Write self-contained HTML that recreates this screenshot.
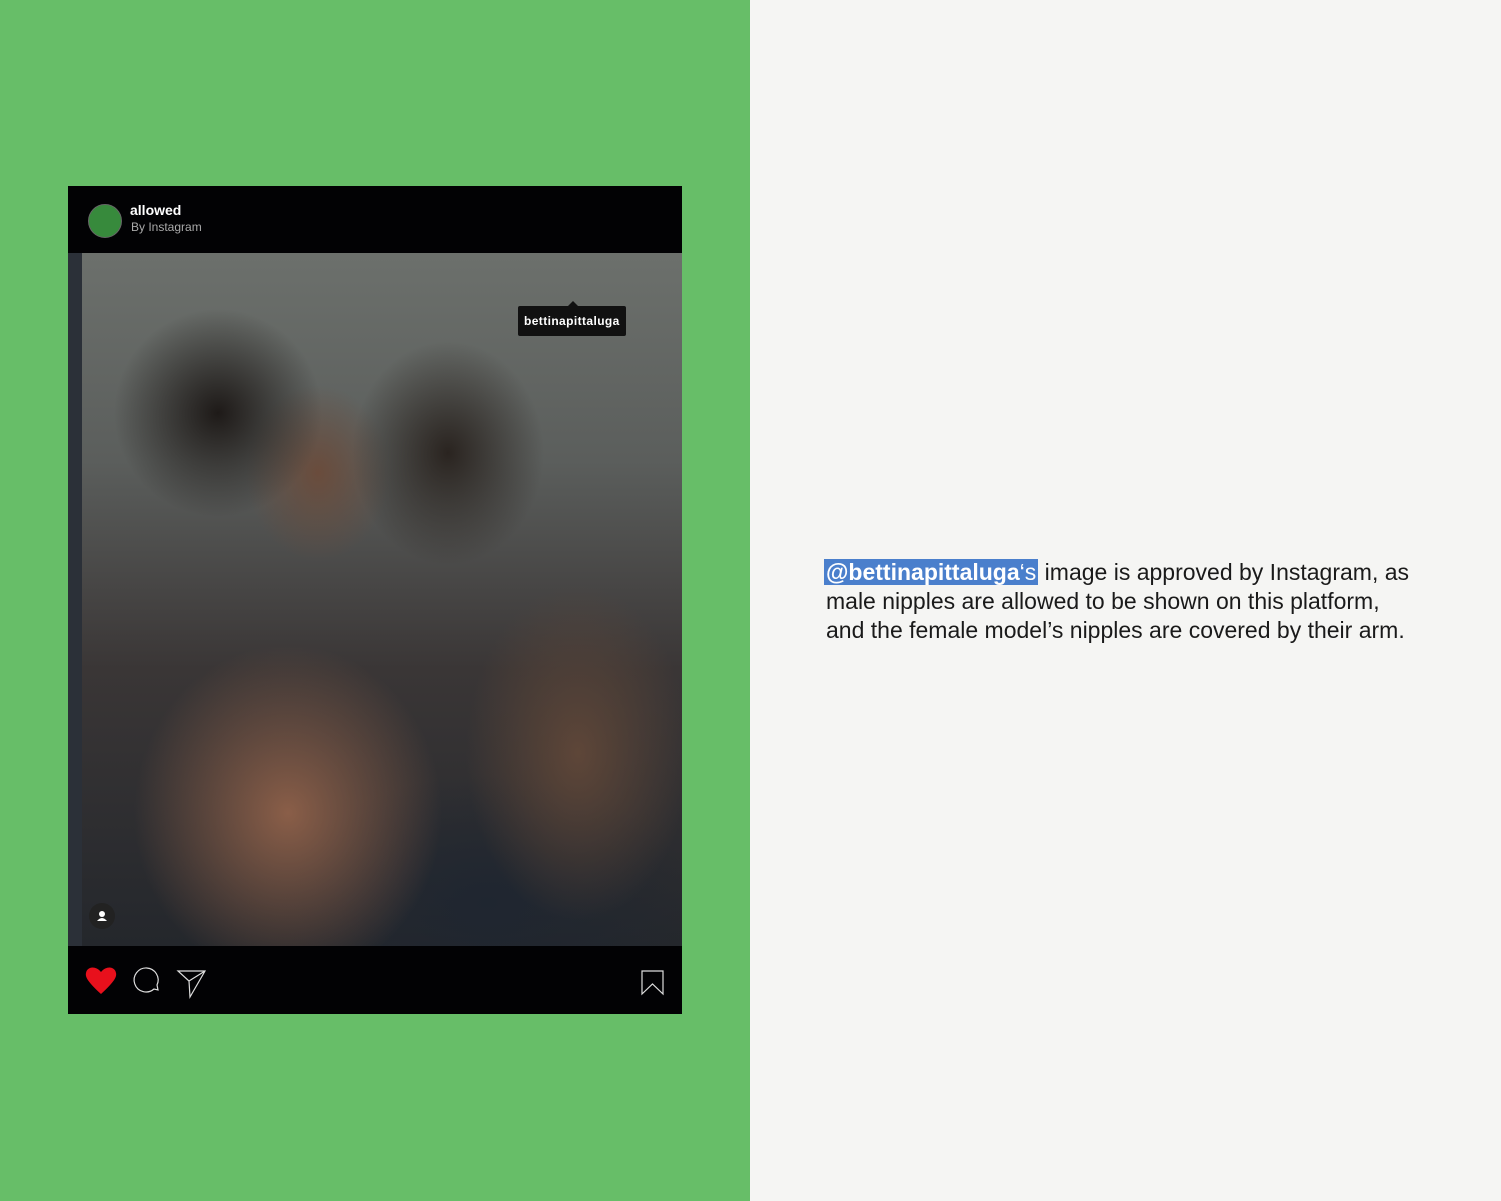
<!DOCTYPE html>
<html><head><style>
body{margin:0;width:1501px;height:1201px;position:relative;background:#f5f5f3;overflow:hidden;font-family:"Liberation Sans",sans-serif}
.left{position:absolute;left:0;top:0;width:750px;height:1201px;background:#67be68}
.card{position:absolute;left:68px;top:186px;width:614px;height:828px;background:#020204}
.photo{position:absolute;left:0;top:67px;width:614px;height:693px;overflow:hidden;
background:linear-gradient(90deg,#2b3038 0,#2b3038 14px,transparent 14px),
radial-gradient(ellipse 120px 140px at 380px 200px,#2a2420,transparent 80%),
radial-gradient(ellipse 130px 130px at 150px 160px,#1e1a18,transparent 80%),
radial-gradient(ellipse 90px 110px at 250px 220px,#6a4c3c,transparent 80%),
radial-gradient(ellipse 220px 240px at 220px 560px,#8a5e48,transparent 70%),
radial-gradient(ellipse 160px 240px at 510px 500px,#5e4638,transparent 70%),
radial-gradient(ellipse 260px 160px at 420px 650px,#1f2630,transparent 80%),
linear-gradient(180deg,#6c706c 0%,#5b5e5c 30%,#3a3636 60%,#24272c 100%)}
.tag{position:absolute;left:450px;top:53px;background:#111;color:#fff;font-size:12px;font-weight:bold;padding:8px 6px;border-radius:2px;letter-spacing:.4px}
.tag:before{content:"";position:absolute;left:50px;top:-5px;border:5px solid transparent;border-top:0;border-bottom-color:#111}
p{position:absolute;left:826px;top:558px;margin:0;font-size:23px;line-height:29px;color:#1a1a1a;width:590px}
.hl{background:#4a7fcc;color:#fff;padding:0 2px;margin-left:-2px}
</style></head><body>
<div class="left"></div>
<div class="card">
 <div style="position:absolute;left:20px;top:18px;width:32px;height:32px;border-radius:50%;background:#378a3c;border:1px solid #666"></div>
 <div style="position:absolute;left:62px;top:16px;color:#fff;font-weight:bold;font-size:14px">allowed</div>
 <div style="position:absolute;left:63px;top:34px;color:#aaa;font-size:12px">By Instagram</div>
 <div class="photo">
  <div class="tag">bettinapittaluga</div>
  <div style="position:absolute;left:21px;top:650px;width:26px;height:26px;border-radius:50%;background:#222"><svg width="26" height="26"><circle cx="13" cy="11" r="3" fill="#fff"/><path d="M8 18q5-6 10 0z" fill="#fff"/></svg></div>
 </div>
 <svg style="position:absolute;left:0;top:760px" width="614" height="68">
  <path d="M33 48 C20 36 17 31 18 27 C19 21 27 19 33 26 C39 19 47 21 48 27 C49 31 46 36 33 48Z" fill="#e8101c"/>
  <path d="M86 43 A12 12 0 1 1 89 39 L90 44Z" fill="none" stroke="#ddd" stroke-width="1.2"/>
  <path d="M110 25 L137 25 L122 51 L121 35 Z M121 35 L137 25" fill="none" stroke="#ddd" stroke-width="1.2"/>
  <path d="M574 25 L595 25 L595 48 L584.5 38 L574 48Z" fill="none" stroke="#ddd" stroke-width="1.2"/>
 </svg>
</div>
<p><span class="hl"><b>@bettinapittaluga</b>‘s</span> image is approved by Instagram, as male nipples are allowed to be shown on this platform, and the female model’s nipples are covered by their arm.</p>
</body></html>
